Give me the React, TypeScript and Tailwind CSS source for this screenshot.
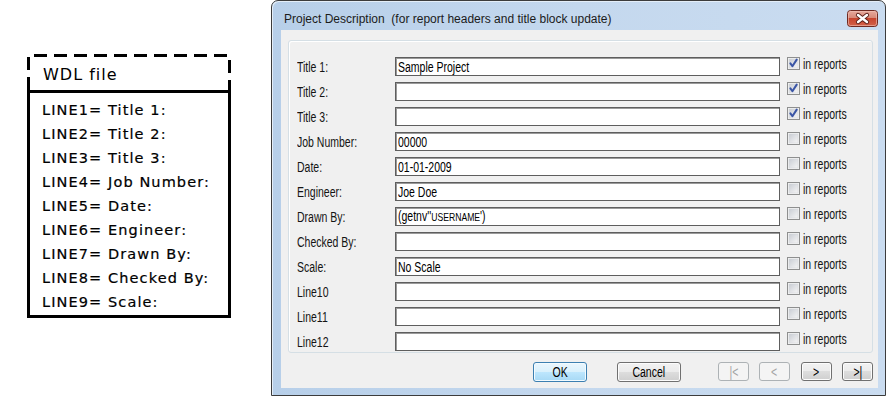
import React from "react";

const SANS = "font-['Liberation_Sans',Arial,sans-serif]";

function N({ children, center = false }: { children: React.ReactNode; center?: boolean }) {
  return (
    <span className={`inline-block whitespace-nowrap scale-x-[0.75] ${center ? "origin-center" : "origin-left"}`}>
      {children}
    </span>
  );
}

type Row = { label: string; value?: React.ReactNode; checked?: boolean };

const rows: Row[] = [
  { label: "Title 1:", value: "Sample Project", checked: true },
  { label: "Title 2:", checked: true },
  { label: "Title 3:", checked: true },
  { label: "Job Number:", value: "00000" },
  { label: "Date:", value: "01-01-2009" },
  { label: "Engineer:", value: "Joe Doe" },
  {
    label: "Drawn By:",
    value: (
      <>
        (getnv''<span className="text-[11.5px]">USERNAME</span>')
      </>
    ),
  },
  { label: "Checked By:" },
  { label: "Scale:", value: "No Scale" },
  { label: "Line10" },
  { label: "Line11" },
  { label: "Line12" },
];

const wdlLines = [
  "LINE1= Title 1:",
  "LINE2= Title 2:",
  "LINE3= Title 3:",
  "LINE4= Job Number:",
  "LINE5= Date:",
  "LINE6= Engineer:",
  "LINE7= Drawn By:",
  "LINE8= Checked By:",
  "LINE9= Scale:",
];

function CheckBox({ checked }: { checked?: boolean }) {
  return (
    <svg width="13" height="13" viewBox="0 0 13 13" className="shrink-0">
      <defs>
        <linearGradient id={checked ? "cbg1" : "cbg0"} x1="0" y1="0" x2="1" y2="1">
          <stop offset="0" stopColor="#c9cdd4" />
          <stop offset="1" stopColor="#f6f6f6" />
        </linearGradient>
      </defs>
      <rect x="0.5" y="0.5" width="12" height="12" fill="#f4f4f4" stroke="#8e8f8f" />
      <rect x="2" y="2" width="9" height="9" fill={`url(#${checked ? "cbg1" : "cbg0"})`} stroke="#d0d3d8" strokeWidth="0.5" />
      {checked && (
        <path
          d="M3.4 6.4 L5.4 9.3 L9.7 2.6"
          fill="none"
          stroke="#3a55a5"
          strokeWidth="2"
          strokeLinecap="round"
          strokeLinejoin="round"
        />
      )}
    </svg>
  );
}

function CloseButton() {
  return (
    <svg width="31" height="17" viewBox="0 0 31 17" className="block">
      <defs>
        <linearGradient id="closeg" x1="0" y1="0" x2="0" y2="1">
          <stop offset="0" stopColor="#e7ab9f" />
          <stop offset="0.45" stopColor="#d88a79" />
          <stop offset="0.5" stopColor="#c7452f" />
          <stop offset="1" stopColor="#d3634a" />
        </linearGradient>
      </defs>
      <rect x="0.5" y="0.5" width="30" height="16" rx="3" fill="url(#closeg)" stroke="#6e2a22" />
      <rect x="1.5" y="1.5" width="28" height="14" rx="2" fill="none" stroke="#f0c3b8" strokeOpacity="0.6" />
      <path d="M11 5 L20 12 M20 5 L11 12" stroke="#5a2019" strokeWidth="4.2" strokeLinecap="round" />
      <path d="M11 5 L20 12 M20 5 L11 12" stroke="#ffffff" strokeWidth="2.4" strokeLinecap="round" />
    </svg>
  );
}

function WinButton({
  children,
  width,
  variant = "normal",
  className = "",
  height = "h-[20px]",
}: {
  children: React.ReactNode;
  width: string;
  variant?: "normal" | "default" | "disabled";
  className?: string;
  height?: string;
}) {
  const styles =
    variant === "default"
      ? "border-[#3c7fb1] bg-[linear-gradient(#eaf6fd_0%,#d9f0fc_50%,#bee6fd_50%,#a7d9f5_100%)] text-black shadow-[inset_0_0_0_1px_#f2fbff]"
      : variant === "disabled"
      ? "border-[#adb2b5] bg-[#f4f4f4] text-[#a3a3a3]"
      : "border-[#707070] bg-[linear-gradient(#f2f2f2_0%,#ebebeb_50%,#dddddd_50%,#cfcfcf_100%)] text-black shadow-[inset_0_0_0_1px_#fcfcfc]";
  return (
    <div
      className={`${width} ${height} ${styles} ${className} ${SANS} border rounded-[3px] flex items-center justify-center text-[14px] leading-none shrink-0`}
    >
      <N center>{children}</N>
    </div>
  );
}

export default function App() {
  return (
    <div className="w-[889px] h-[396px] bg-white flex items-start overflow-hidden">
      {/* WDL file diagram */}
      <div className="ml-[27px] mt-[54px] w-[204px] shrink-0 font-['DejaVu_Sans',Verdana,sans-serif] text-black">
        <div className="relative h-[36px] flex items-center pl-[16px] pt-[6px]">
          <svg className="absolute inset-0" width="204" height="36" viewBox="0 0 204 36">
            <path
              d="M1.5 36 L1.5 1.5 L202.5 1.5 L202.5 36"
              fill="none"
              stroke="#000"
              strokeWidth="3"
              strokeDasharray="13 7"
            />
          </svg>
          <span className="relative text-[16px] tracking-[1px] leading-none">WDL file</span>
        </div>
        <div className="border-[3px] border-black h-[228px] pt-[5px] pl-[12px]">
          {wdlLines.map((l) => (
            <div key={l} className="h-[24px] leading-[24px] text-[14.5px] tracking-[1.1px] whitespace-nowrap [-webkit-text-stroke:0.2px_#000]">
              {l}
            </div>
          ))}
        </div>
      </div>

      {/* Dialog window */}
      <div className="ml-[40px] w-[615px] h-[396px] shrink-0 border border-[#3c3c3c] rounded-t-[7px] bg-[linear-gradient(90deg,#b7cfe9_0%,#c4d8ee_50%,#cadcf0_100%)] shadow-[inset_1px_1px_0_#e4eef8] flex flex-col">
        {/* Title bar */}
        <div className="h-[29px] flex items-start shrink-0">
          <div className={`pl-[12px] pt-[11px] text-[12px] leading-[14px] text-[#1b1b1b] ${SANS} whitespace-pre`}>
            {"Project Description  (for report headers and title block update)"}
          </div>
          <div className="ml-auto mr-[7px] mt-[9px]">
            <CloseButton />
          </div>
        </div>

        {/* Client */}
        <div className="flex-1 ml-[9px] mr-[7px] mb-[7px] bg-[#f0f0f0] flex flex-col">
          {/* Group box */}
          <div className="mt-[10px] ml-[7px] mr-[5px] h-[313px] border border-[#d5dfe5] rounded-[3px] shadow-[inset_1px_1px_0_#ffffff] pt-[16px] pl-[8px] flex flex-col gap-[6px]">
            {rows.map((r) => (
              <div key={r.label} className={`h-[19px] flex items-start ${SANS} text-[14px] text-[#141414]`}>
                <div className="w-[98px] h-[19px] flex items-center leading-none">
                  <N>{r.label}</N>
                </div>
                <div className="w-[385px] h-[19px] bg-white border border-[#5e5e5e] shadow-[inset_1px_1px_0_#9a9a9a] flex items-center pl-[2px] leading-none text-black overflow-hidden">
                  <N>{r.value}</N>
                </div>
                <div className="ml-[7px] h-[13px] flex items-center">
                  <CheckBox checked={r.checked} />
                  <span className="ml-[3px] leading-none">
                    <N>in reports</N>
                  </span>
                </div>
              </div>
            ))}
          </div>

          {/* Buttons */}
          <div className="mt-[9px] pl-[252px] flex items-start">
            <WinButton width="w-[54px]" variant="default">OK</WinButton>
            <WinButton width="w-[64px]" className="ml-[30px]">Cancel</WinButton>
            <WinButton width="w-[31px]" variant="disabled" height="h-[19px]" className="ml-[37px]">|&lt;</WinButton>
            <WinButton width="w-[31px]" variant="disabled" height="h-[19px]" className="ml-[10px]">&lt;</WinButton>
            <WinButton width="w-[31px]" height="h-[19px]" className="ml-[11px]">&gt;</WinButton>
            <WinButton width="w-[31px]" height="h-[19px]" className="ml-[10px]">&gt;|</WinButton>
          </div>
        </div>
      </div>
    </div>
  );
}
